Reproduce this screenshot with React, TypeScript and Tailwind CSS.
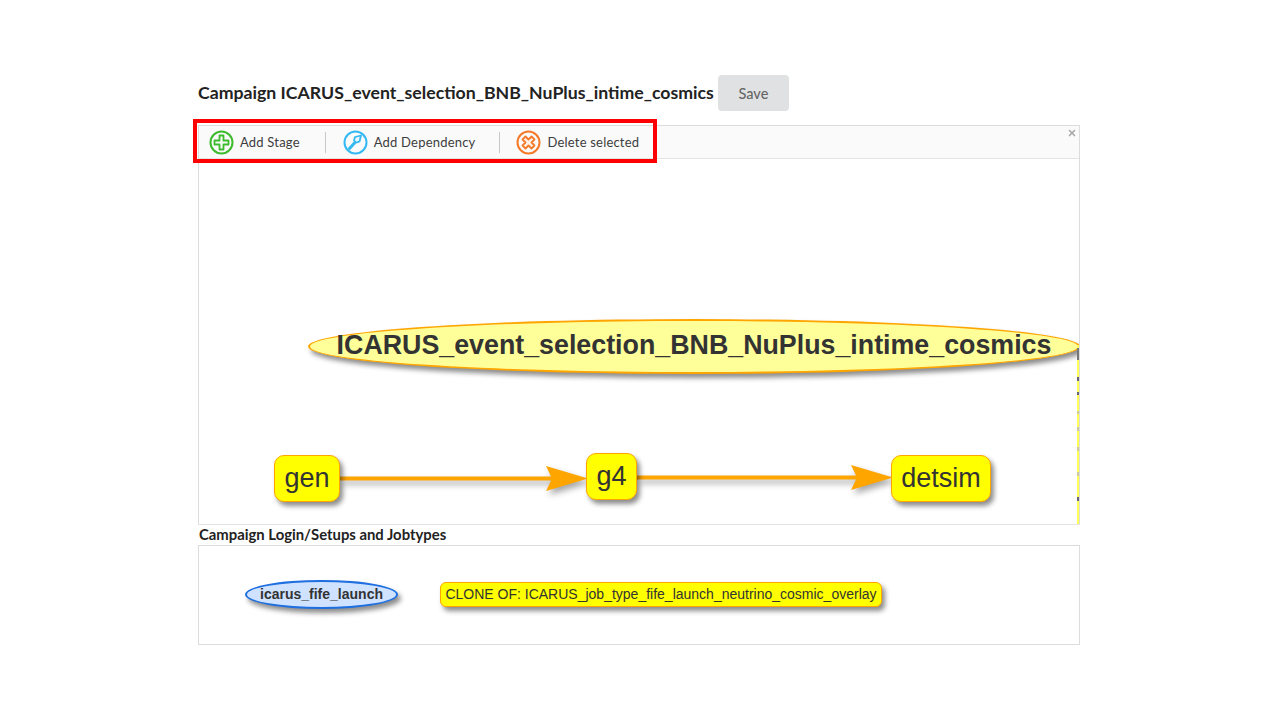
import React from 'react';
import { X } from 'lucide-react';

const lato = { fontFamily: 'Lato, sans-serif' };

// dark specks along the clipped right edge of the canvas
const edgeMarks = [
  { top: 189, height: 12, color: '#777' },
  { top: 218, height: 4, color: '#667' },
  { top: 233, height: 3, color: '#667' },
  { top: 252, height: 3, color: '#cc9' },
  { top: 268, height: 4, color: '#cc9' },
  { top: 288, height: 4, color: '#cc9' },
  { top: 313, height: 4, color: '#cc9' },
  { top: 338, height: 4, color: '#667' },
];

function AddIcon() {
  return (
    <svg width="25" height="25" viewBox="0 0 25 25" fill="none">
      <circle cx="12.5" cy="12.5" r="11" stroke="#3dba2e" strokeWidth="2" />
      <path d="M10.5 5.5h4v5h5v4h-5v5h-4v-5h-5v-4h5z" stroke="#3dba2e" strokeWidth="1.8" strokeLinejoin="round" fill="#f4fbf2" />
    </svg>
  );
}

function DepIcon() {
  return (
    <svg width="25" height="25" viewBox="0 0 25 25" fill="none">
      <circle cx="12.5" cy="12.5" r="11" stroke="#35b9f2" strokeWidth="2" />
      <path d="M6.5 18.5l5-5.5" stroke="#35b9f2" strokeWidth="3" strokeLinecap="round" />
      <path d="M11 10.5l1-3.5 6-1.5-1.5 6-3.5 1.2z" stroke="#35b9f2" strokeWidth="1.8" strokeLinejoin="round" fill="#eaf8fe" />
    </svg>
  );
}

function DeleteIcon() {
  return (
    <svg width="25" height="25" viewBox="0 0 25 25" fill="none">
      <circle cx="12.5" cy="12.5" r="11" stroke="#f47a2a" strokeWidth="2" />
      <path d="M9.5 6.5l3 3 3-3 3 3-3 3 3 3-3 3-3-3-3 3-3-3 3-3-3-3z" stroke="#f47a2a" strokeWidth="1.8" strokeLinejoin="round" fill="#fef1e8" />
    </svg>
  );
}

function ToolButton({ icon, label }: { icon: React.ReactNode; label: string }) {
  return (
    <div className="flex items-center gap-[6px]">
      {icon}
      <span className="pt-[2px] text-[13px] tracking-[0.2px] text-[#3d3d3d]">{label}</span>
    </div>
  );
}

function Arrow({ left, top, width }: { left: number; top: number; width: number }) {
  return (
    <svg
      className="absolute drop-shadow-[3px_4px_3px_rgba(0,0,0,0.35)]"
      style={{ left, top }}
      width={width}
      height="30"
      viewBox={`0 0 ${width} 30`}
    >
      <rect x="0" y="12.5" width={width - 30} height="4" fill="#ffa500" />
      <path d={`M${width - 42} 2L${width} 14.5L${width - 42} 27L${width - 36} 14.5Z`} fill="#ffa500" />
    </svg>
  );
}

function StageNode({ left, top, width, height, label }: { left: number; top: number; width: number; height: number; label: string }) {
  return (
    <div
      className="absolute flex items-center justify-center rounded-[10px] border border-[#ffa500] bg-[#ffff00] text-[27px] text-[#333] shadow-[3px_4px_5px_rgba(0,0,0,0.45)]"
      style={{ left, top, width, height, fontFamily: '"Liberation Sans", sans-serif' }}
    >
      {label}
    </div>
  );
}

export default function App() {
  return (
    <div className="relative h-[720px] w-[1280px] overflow-hidden bg-white pl-[198px] pt-[75px]" style={lato}>
      <div className="flex h-[36px] items-center">
        <h1 className="text-[17.7px] font-bold text-[#222]">Campaign ICARUS_event_selection_BNB_NuPlus_intime_cosmics</h1>
        <button className="ml-[4px] h-[36px] w-[71px] rounded-[4px] bg-[#e0e1e2] pt-[1px] text-[14.5px] font-medium text-[#666]">Save</button>
      </div>

      <div className="mt-[14px] w-[882px] border border-[#dcdcdc] border-b-[#e4e4e4]">
        <div className="relative flex h-[33px] items-center border-b border-[#e4e4e4] bg-[#fafafa] pl-[10px]">
          <ToolButton icon={<AddIcon />} label="Add Stage" />
          <div className="ml-[25px] mr-[17px] h-[21px] w-px bg-[#c8c8c8]" />
          <ToolButton icon={<DepIcon />} label="Add Dependency" />
          <div className="ml-[24px] mr-[16px] h-[21px] w-px bg-[#c8c8c8]" />
          <ToolButton icon={<DeleteIcon />} label="Delete selected" />
          <X className="absolute right-[2px] top-[2px] text-[#aaa]" size={10} strokeWidth={4} />
        </div>

        <div className="relative h-[365px] overflow-hidden bg-white">
          <div
            className="absolute left-[109px] top-[160px] flex h-[55px] w-[772px] items-center justify-center rounded-[50%] border-[2.5px] border-[#ffa500] bg-[#ffff99] pb-[3px] text-[26.8px] font-bold text-[#333] shadow-[3px_4px_5px_rgba(0,0,0,0.45)]"
            style={{ fontFamily: '"Liberation Sans", sans-serif' }}
          >
            ICARUS_event_selection_BNB_NuPlus_intime_cosmics
          </div>
          <div className="absolute right-0 top-[186px] h-[179px] w-[2px] bg-[#ffff55]" />
          {edgeMarks.map((m) => (
            <div key={m.top} className="absolute right-0 w-[2px]" style={{ top: m.top, height: m.height, backgroundColor: m.color }} />
          ))}

          <Arrow left={141} top={305} width={248} />
          <Arrow left={438} top={304} width={256} />
          <StageNode left={75} top={296} width={66} height={47} label="gen" />
          <StageNode left={387} top={294} width={51} height={47} label="g4" />
          <StageNode left={692} top={296} width={100} height={47} label="detsim" />
        </div>
      </div>

      <h2 className="h-[20px] pl-[1px] text-[14.85px] font-bold leading-[18px] text-[#222]">Campaign Login/Setups and Jobtypes</h2>

      <div className="relative h-[100px] w-[882px] border border-[#dcdcdc] bg-white" style={{ fontFamily: '"Liberation Sans", sans-serif' }}>
        <div className="absolute left-[46px] top-[34px] flex h-[29px] w-[153px] items-center justify-center rounded-[50%] border-2 border-[#1e6fe0] bg-[#cfe2ff] text-[14px] font-bold text-[#333] shadow-[3px_4px_5px_rgba(0,0,0,0.45)]">
          icarus_fife_launch
        </div>
        <div className="absolute left-[241px] top-[36px] flex h-[25px] w-[442px] items-center justify-center rounded-[6px] border border-[#ffa500] bg-[#ffff00] text-[14px] text-[#333] shadow-[3px_4px_5px_rgba(0,0,0,0.45)]">
          CLONE OF: ICARUS_job_type_fife_launch_neutrino_cosmic_overlay
        </div>
      </div>

      {/* red highlight drawn over the toolbar */}
      <div className="absolute left-[193px] top-[119px] h-[44px] w-[464px] border-[4px] border-[#ff0000]" />
    </div>
  );
}
